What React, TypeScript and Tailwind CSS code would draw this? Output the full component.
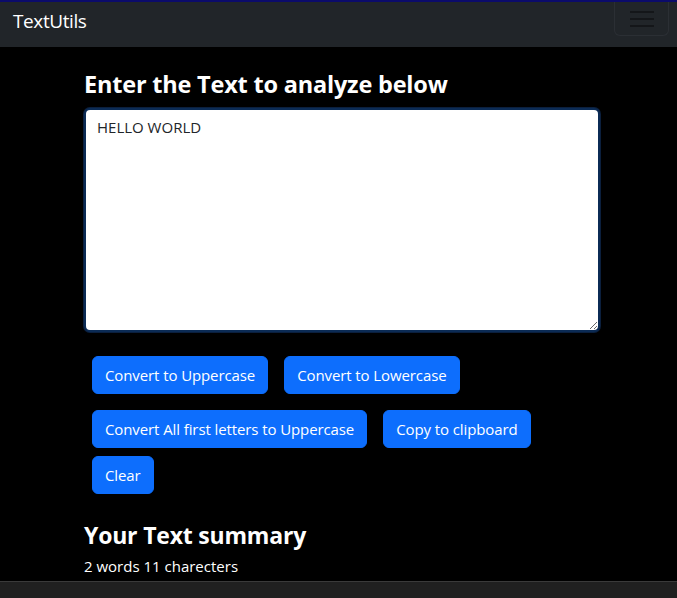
import React from "react";

const font = { fontFamily: '"Open Sans", "Noto Sans", sans-serif' };

export default function App() {
  const btn =
    "bg-[#0d6efd] text-white text-[15px] leading-[24px] tracking-[-0.1px] px-3 py-[6px] rounded-md border border-[#0d6efd]";
  return (
    <div className="min-h-[598px] bg-black flex flex-col" style={font}>
      <div className="h-[2px] bg-[#0b0b6b]" />
      <nav className="h-[45px] bg-[#212529] flex items-start justify-between pl-[13px] pr-[8px]">
        <span className="text-white text-[19px] leading-[26px] mt-[6px] tracking-[-0.4px]">TextUtils</span>
        <button className="w-[55px] h-[34px] border border-[#2b2f34] rounded-b-md border-t-0 flex flex-col items-center justify-center gap-[5px]">
          <span className="block w-[24px] h-[2px] bg-[#141619]" />
          <span className="block w-[24px] h-[2px] bg-[#141619]" />
          <span className="block w-[24px] h-[2px] bg-[#141619]" />
        </button>
      </nav>
      <main className="flex-1 w-[516px] ml-[84px] text-white">
        <h1 className="text-[23.5px] font-bold leading-[30px] mt-[22px] mb-[9px] tracking-[-0.2px]">
          Enter the Text to analyze below
        </h1>
        <div className="relative">
          <textarea
            className="block w-[516px] h-[224px] bg-white text-[#212529] text-[15px] leading-[24px] px-[11px] py-[5px] rounded-md border-2 border-[#0b2b55] shadow-[0_0_0_1px_#0b1f3d] resize-y outline-none"
            defaultValue="HELLO WORLD"
            style={font}
          />
        </div>
        <div className="flex flex-wrap mt-[24px]">
          <button className={`${btn} ml-[8px]`}>Convert to Uppercase</button>
          <button className={`${btn} ml-[16px]`}>Convert to Lowercase</button>
        </div>
        <div className="flex flex-wrap mt-[16px]">
          <button className={`${btn} ml-[8px]`}>Convert All first letters to Uppercase</button>
          <button className={`${btn} ml-[16px]`}>Copy to clipboard</button>
        </div>
        <div className="flex flex-wrap mt-[8px]">
          <button className={`${btn} ml-[8px]`}>Clear</button>
        </div>
        <h2 className="text-[23px] font-bold leading-[30px] mt-[26px] tracking-[-0.2px]">Your Text summary</h2>
        <p className="text-[15px] leading-[20px] mt-[6px]">2 words 11 charecters</p>
      </main>
      <div className="h-[17px] bg-[#202020] border-t border-[#3a3a3a]" />
    </div>
  );
}
